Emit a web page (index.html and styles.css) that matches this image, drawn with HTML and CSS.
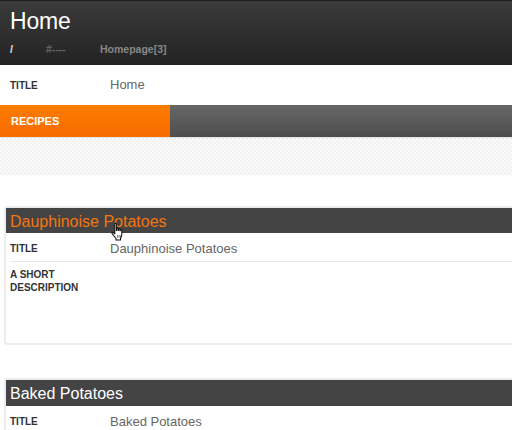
FILE: index.html
```html
<!DOCTYPE html>
<html>
<head>
<meta charset="utf-8">
<link rel="stylesheet" href="styles.css">
</head>
<body>
<header class="top">
  <h1 class="page-title">Home</h1>
  <div class="crumbs">
    <span class="crumb-root">/</span>
    <span class="crumb-hash">#----</span>
    <span class="crumb-page">Homepage[3]</span>
  </div>
</header>
<div class="field-row top-row">
  <div class="label">TITLE</div>
  <div class="value">Home</div>
</div>
<nav class="tabs">
  <div class="tab active">RECIPES</div>
  <div class="tab-rest"></div>
</nav>
<div class="pattern"></div>
<main class="cards">
  <section class="card">
    <div class="card-head orange">Dauphinoise Potatoes
      <svg class="cursor" width="17" height="20" viewBox="0 0 16 18">
        <path d="M4.5 1.5c0-.8 1.5-.8 1.5 0v6h.3V6c0-.8 1.4-.8 1.4 0v1.6h.3V6.6c0-.8 1.4-.8 1.4 0v1.2h.3v-.6c0-.8 1.4-.8 1.4 0v4.3c0 1.5-.8 2.6-1.2 3.4v1.6H5.6v-1.4L2 10.6c-.6-.8.3-1.8 1.2-1.1l1.3 1.2z" fill="#fff" stroke="#111" stroke-width="1" stroke-linejoin="round"/>
        <path d="M7 12v2.3M8.6 12v2.3M10.2 12v2.3" stroke="#111" stroke-width=".6"/>
      </svg>
    </div>
    <div class="field-row sep">
      <div class="label">TITLE</div>
      <div class="value">Dauphinoise Potatoes</div>
    </div>
    <div class="field-row desc">
      <div class="label">A SHORT<br>DESCRIPTION</div>
      <div class="value"></div>
    </div>
  </section>
  <section class="card">
    <div class="card-head">Baked Potatoes</div>
    <div class="field-row">
      <div class="label">TITLE</div>
      <div class="value">Baked Potatoes</div>
    </div>
  </section>
</main>
</body>
</html>
```

FILE: styles.css
```css
html, body {
  margin: 0;
  padding: 0;
  background: #fff;
  overflow: hidden;
  font-family: "Liberation Sans", Arial, sans-serif;
}

.top {
  height: 64px;
  border-top: 1px solid #1c1c1c;
  background: linear-gradient(#3b3b3b, #232323);
  padding: 0 10px;
  box-sizing: content-box;
}

.page-title {
  margin: 0;
  padding-top: 7px;
  font-size: 23px;
  font-weight: normal;
  color: #fff;
  line-height: 26px;
  letter-spacing: -0.2px;
}

.crumbs {
  display: flex;
  margin-top: 9px;
  font-size: 10.5px;
  font-weight: bold;
  line-height: 12px;
}

.crumb-root {
  color: #e8e8e8;
  width: 36px;
}

.crumb-hash {
  color: #666;
  width: 54px;
}

.crumb-page {
  color: #878787;
}

.field-row {
  display: flex;
  align-items: flex-start;
}

.label {
  width: 100px;
  font-size: 10px;
  font-weight: bold;
  color: #333;
  line-height: 13px;
}

.value {
  font-size: 13px;
  color: #666;
  line-height: 16px;
}

.top-row {
  height: 40px;
  padding: 0 10px;
  align-items: center;
}

.top-row .label {
  padding-top: 1px;
}

.tabs {
  display: flex;
  height: 32px;
  border-bottom: 1px solid #e2e2e2;
}

.tab {
  width: 159px;
  padding-left: 11px;
  background: linear-gradient(#fd7d00, #f86b00);
  color: #fff;
  font-size: 11px;
  font-weight: bold;
  line-height: 32px;
}

.tab-rest {
  flex: 1;
  background: linear-gradient(#676767, #4e4e4e);
}

.pattern {
  height: 37px;
  background-color: #fbfbfb;
  background-image:
    linear-gradient(45deg, #f1f1f1 25%, transparent 25%, transparent 75%, #f1f1f1 75%),
    linear-gradient(45deg, #f1f1f1 25%, transparent 25%, transparent 75%, #f1f1f1 75%);
  background-size: 4px 4px;
  background-position: 0 0, 2px 2px;
}

.cards {
  padding: 31px 0 0 4px;
  margin-right: -12px;
}

.card {
  border: 2px solid #ececec;
  border-radius: 3px;
  margin-bottom: 33px;
  background: #fff;
}

.card-head {
  position: relative;
  height: 26px;
  background: #444;
  color: #fff;
  font-size: 16px;
  line-height: 27px;
  padding-left: 4px;
}

.card-head.orange {
  height: 25px;
  color: #f6740f;
}

.cursor {
  position: absolute;
  left: 104px;
  top: 14px;
}

.card .field-row {
  margin-left: 4px;
}

.card .field-row.sep {
  height: 28px;
  border-bottom: 1px solid #e8e8e8;
  align-items: center;
}

.card .field-row.sep .value,
.card .field-row:last-child .value {
  padding-top: 3px;
}

.card .field-row.sep .label,
.card .field-row:last-child .label {
  padding-top: 2px;
}

.card .field-row.desc {
  height: 81px;
  padding-top: 4px;
  box-sizing: border-box;
}

.card:last-child .field-row {
  height: 28px;
  align-items: center;
}
```
